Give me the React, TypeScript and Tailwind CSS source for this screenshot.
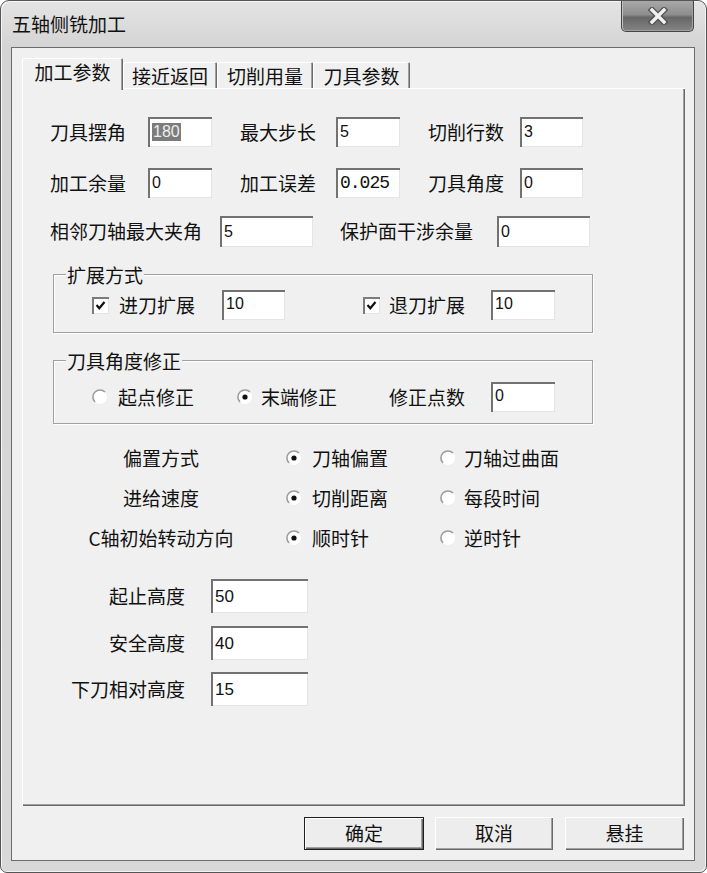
import React from 'react'

function Field({ className, children }: { className: string; children?: React.ReactNode }) {
	return (
		<div className={`flex shrink-0 items-center bg-white pl-[4px] shadow-[inset_2px_2px_0_#727272,inset_-1px_-1px_0_#e4e4e4] font-['Liberation_Sans',sans-serif] text-[16px] leading-none text-[#111] ${className}`}>
			{children}
		</div>
	)
}

function Check() {
	return (
		<div className="flex h-[17px] w-[17px] shrink-0 items-center justify-center bg-white shadow-[inset_2px_2px_0_#7c7c7c,inset_-1px_-1px_0_#e4e4e4]">
			<svg width="11" height="11" viewBox="0 0 11 11">
				<path d="M1.5 5 L4.3 8.2 L9.5 2" stroke="#111" strokeWidth="2.2" fill="none" />
			</svg>
		</div>
	)
}

function Radio({ on }: { on?: boolean }) {
	return (
		<svg width="16" height="16" viewBox="0 0 16 16" className="shrink-0">
			<circle cx="8" cy="8" r="7" fill="#fff" />
			<path d="M3 13 A7 7 0 0 1 13 3" stroke="#9c9c9c" strokeWidth="1.6" fill="none" />
			{on && <circle cx="8" cy="8" r="2.6" fill="#111" />}
		</svg>
	)
}

const tabShadow = 'shadow-[inset_1px_1px_0_#ffffff,inset_-1px_0_0_#696969,inset_-2px_0_0_#a0a0a0]'

export default function App() {
	return (
		<div className="h-[873px] w-[707px] bg-white font-['Noto_Sans_CJK_SC','Noto_Sans',sans-serif] text-[19px] text-[#111]">
			<div className="flex h-full w-full flex-col rounded-t-[9px] rounded-b-[7px] border border-[#555555] bg-[linear-gradient(180deg,#e4e4e4_0px,#d4d4d4_46px,#d8d8d8_100%)] shadow-[inset_1px_1px_0_#f6f6f6,inset_-1px_-1px_0_#f2f2f2]">
				{/* title bar */}
				<div className="flex h-[46px] shrink-0 items-start">
					<div className="pl-[11px] pt-[10px] leading-[26px]">五轴侧铣加工</div>
					<div className="ml-auto mr-[12px] flex h-[31px] w-[73px] items-center justify-center rounded-b-[5px] border border-t-0 border-[#464646] bg-[linear-gradient(180deg,#a8a8a8_0%,#8e8e8e_45%,#676767_55%,#848484_100%)] shadow-[inset_1px_0_0_#c0c0c0,inset_-1px_-1px_0_#a0a0a0]">
						<svg width="22" height="18" viewBox="0 0 22 18">
							<path d="M5 3 L17 15 M17 3 L5 15" stroke="#505050" strokeWidth="6" strokeLinecap="square" />
							<path d="M5 3 L17 15 M17 3 L5 15" stroke="#f0f0f0" strokeWidth="3.4" strokeLinecap="square" />
						</svg>
					</div>
				</div>

				{/* client area */}
				<div className="mb-[11px] ml-[10px] mr-[11px] flex flex-1 flex-col border border-[#6c6c6c] bg-[#f0f0f0]">
					{/* tabs */}
					<div className="flex h-[40px] items-end pl-[10px] pt-[10px]">
						<div className={`relative z-10 -mb-[2px] flex h-[32px] w-[101px] items-center justify-center rounded-t-[2px] bg-[#f0f0f0] pb-[3px] ${tabShadow}`}>加工参数</div>
						<div className={`flex h-[26px] w-[94px] items-center justify-center rounded-t-[2px] pt-[2px] ${tabShadow}`}>接近返回</div>
						<div className={`flex h-[26px] w-[96px] items-center justify-center rounded-t-[2px] pt-[2px] ${tabShadow}`}>切削用量</div>
						<div className={`flex h-[26px] w-[97px] items-center justify-center rounded-t-[2px] pt-[2px] ${tabShadow}`}>刀具参数</div>
					</div>

					{/* panel */}
					<div className="ml-[10px] flex h-[718px] w-[663px] flex-col pl-[28px] pt-[29px] shadow-[inset_1px_1px_0_#ffffff,inset_-1px_-1px_0_#696969,inset_-2px_-2px_0_#a0a0a0]">
						<div className="flex h-[30px] items-center">
							<span className="w-[98px] shrink-0">刀具摆角</span>
							<Field className="h-full w-[64px]"><span className="bg-[#7c7c7c] px-[1px] py-[1px] text-[#eeeeee]">180</span></Field>
							<span className="ml-[28px] w-[96px] shrink-0">最大步长</span>
							<Field className="h-full w-[64px]">5</Field>
							<span className="ml-[28px] w-[92px] shrink-0">切削行数</span>
							<Field className="h-full w-[63px]">3</Field>
						</div>
						<div className="mt-[21px] flex h-[30px] items-center">
							<span className="w-[98px] shrink-0">加工余量</span>
							<Field className="h-full w-[64px]">0</Field>
							<span className="ml-[28px] w-[96px] shrink-0">加工误差</span>
							<Field className="h-full w-[64px] pl-[2px]"><span className="font-['Liberation_Mono',monospace] text-[18px] tracking-[-1px]">0.025</span></Field>
							<span className="ml-[28px] w-[92px] shrink-0">刀具角度</span>
							<Field className="h-full w-[63px]">0</Field>
						</div>
						<div className="mt-[18px] flex h-[31px] items-center">
							<span className="w-[170px] shrink-0">相邻刀轴最大夹角</span>
							<Field className="h-full w-[93px]">5</Field>
							<span className="ml-[27px] w-[157px] shrink-0">保护面干涉余量</span>
							<Field className="h-full w-[93px]">0</Field>
						</div>

						{/* 扩展方式 */}
						<div className="ml-[3px] mt-[27px] h-[59px] w-[540px] shrink-0 border border-[#a0a0a0] shadow-[inset_1px_1px_0_#ffffff,1px_1px_0_#ffffff]">
							<div className="-mt-[12px] ml-[12px] w-fit bg-[#f0f0f0] px-[1px] leading-[24px]">扩展方式</div>
							<div className="mt-[3px] flex h-[30px] items-center">
								<div className="ml-[38px]"><Check /></div>
								<span className="ml-[10px] w-[103px] shrink-0">进刀扩展</span>
								<Field className="h-full w-[63px] items-start pt-[6px] text-[14px]">10</Field>
								<div className="ml-[78px]"><Check /></div>
								<span className="ml-[9px] w-[102px] shrink-0">退刀扩展</span>
								<Field className="h-full w-[64px] items-start pt-[6px] text-[14px]">10</Field>
							</div>
						</div>

						{/* 刀具角度修正 */}
						<div className="ml-[3px] mt-[27px] h-[64px] w-[540px] shrink-0 border border-[#a0a0a0] shadow-[inset_1px_1px_0_#ffffff,1px_1px_0_#ffffff]">
							<div className="-mt-[12px] ml-[12px] w-fit bg-[#f0f0f0] px-[1px] leading-[24px]">刀具角度修正</div>
							<div className="mt-[9px] flex h-[30px] items-center">
								<div className="ml-[38px] flex"><Radio /></div>
								<span className="ml-[10px] w-[119px] shrink-0">起点修正</span>
								<Radio on />
								<span className="ml-[8px] w-[128px] shrink-0">末端修正</span>
								<span className="w-[102px] shrink-0">修正点数</span>
								<Field className="h-full w-[64px] items-start pt-[6px] text-[14px]">0</Field>
							</div>
						</div>

						{/* options */}
						<div className="mt-[14px] flex h-[40px] items-center">
							<span className="w-[222px] shrink-0 text-center">偏置方式</span>
							<div className="ml-[14px] flex"><Radio on /></div>
							<span className="ml-[10px] w-[128px] shrink-0">刀轴偏置</span>
							<Radio />
							<span className="ml-[8px]">刀轴过曲面</span>
						</div>
						<div className="flex h-[40px] items-center">
							<span className="w-[222px] shrink-0 text-center">进给速度</span>
							<div className="ml-[14px] flex"><Radio on /></div>
							<span className="ml-[10px] w-[128px] shrink-0">切削距离</span>
							<Radio />
							<span className="ml-[8px]">每段时间</span>
						</div>
						<div className="flex h-[40px] items-center">
							<span className="w-[222px] shrink-0 text-center">C轴初始转动方向</span>
							<div className="ml-[14px] flex"><Radio on /></div>
							<span className="ml-[10px] w-[128px] shrink-0">顺时针</span>
							<Radio />
							<span className="ml-[8px]">逆时针</span>
						</div>

						{/* heights */}
						<div className="mt-[21px] flex h-[34px] items-center">
							<span className="w-[135px] shrink-0 text-right">起止高度</span>
							<Field className="ml-[26px] h-full w-[97px] text-[17px]">50</Field>
						</div>
						<div className="mt-[13px] flex h-[34px] items-center">
							<span className="w-[135px] shrink-0 text-right">安全高度</span>
							<Field className="ml-[26px] h-full w-[97px] text-[17px]">40</Field>
						</div>
						<div className="mt-[12px] flex h-[34px] items-center">
							<span className="w-[135px] shrink-0 text-right">下刀相对高度</span>
							<Field className="ml-[26px] h-full w-[97px] text-[17px]">15</Field>
						</div>
					</div>

					{/* buttons */}
					<div className="mt-[11px] flex justify-end pr-[10px]">
						<button className="h-[33px] w-[120px] border border-[#1e1e1e] bg-[#ededed] shadow-[inset_1px_1px_0_#ffffff,inset_-1px_-1px_0_#696969,inset_-2px_-2px_0_#a0a0a0]">确定</button>
						<button className="ml-[11px] h-[33px] w-[118px] bg-[#ededed] shadow-[inset_1px_1px_0_#ffffff,inset_-1px_-1px_0_#696969,inset_-2px_-2px_0_#a0a0a0]">取消</button>
						<button className="ml-[12px] h-[33px] w-[119px] bg-[#ededed] shadow-[inset_1px_1px_0_#ffffff,inset_-1px_-1px_0_#696969,inset_-2px_-2px_0_#a0a0a0]">悬挂</button>
					</div>
				</div>
			</div>
		</div>
	)
}
